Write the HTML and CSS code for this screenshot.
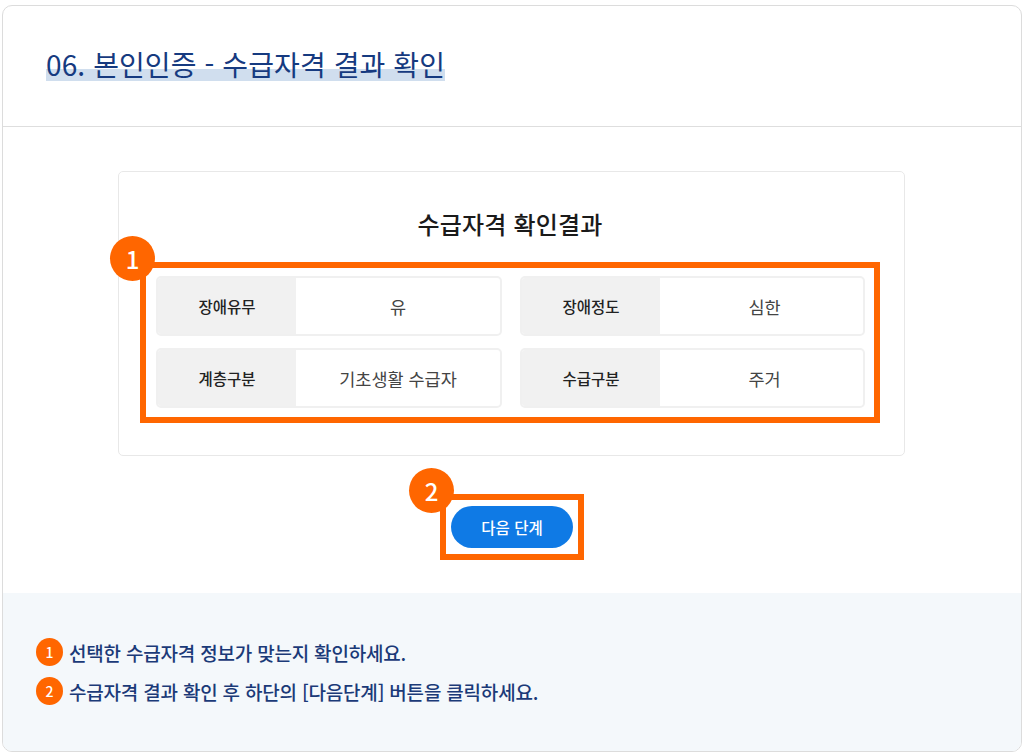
FILE: index.html
```html
<!DOCTYPE html>
<html lang="ko">
<head>
<meta charset="utf-8">
<title>본인인증 - 수급자격 결과 확인</title>
<link rel="stylesheet" href="styles.css">
</head>
<body>
<main class="card">
  <header class="head">
    <h1 class="title">06. 본인인증 - 수급자격 결과 확인</h1>
  </header>
  <section class="body">
    <div class="panel">
      <h2 class="panel-title">수급자격 확인결과</h2>
      <div class="mark mark-grid">
        <span class="badge">1</span>
        <div class="grid">
          <div class="row"><div class="label">장애유무</div><div class="value">유</div></div>
          <div class="row row-right"><div class="label">장애정도</div><div class="value">심한</div></div>
          <div class="row"><div class="label">계층구분</div><div class="value">기초생활 수급자</div></div>
          <div class="row row-right"><div class="label">수급구분</div><div class="value">주거</div></div>
        </div>
      </div>
    </div>
    <div class="mark mark-btn">
      <span class="badge">2</span>
      <button class="next" type="button">다음 단계</button>
    </div>
  </section>
  <footer class="foot">
    <p class="note"><span class="dot">1</span>선택한 수급자격 정보가 맞는지 확인하세요.</p>
    <p class="note"><span class="dot">2</span>수급자격 결과 확인 후 하단의 [다음단계] 버튼을 클릭하세요.</p>
  </footer>
</main>
</body>
</html>
```
FILE: styles.css
```css
* { box-sizing: border-box; }
html, body { margin: 0; height: 100%; background: #fff; }
body {
  padding: 5px 3px 2px 2px;
  font-family: "Noto Sans CJK KR", "Noto Sans", sans-serif;
}
.card {
  height: 747px;
  border: 1px solid #dcdcdc;
  border-radius: 10px;
  overflow: hidden;
  display: flex;
  flex-direction: column;
  background: #fff;
}
.head {
  height: 121px;
  flex: none;
  border-bottom: 1px solid #dedede;
  padding: 39px 0 0 43px;
}
.title {
  display: inline-block;
  margin: 0;
  font-size: 28px;
  font-weight: 400;
  line-height: 38px;
  letter-spacing: 0.1px;
  color: #163a80;
  background: linear-gradient(transparent 63%, #d0deee 63%, #d0deee 95%, transparent 95%);
}
.body {
  flex: 1;
  display: flex;
  flex-direction: column;
  align-items: center;
  padding-top: 44px;
}
.panel {
  width: 787px;
  height: 285px;
  align-self: flex-start;
  margin-left: 115px;
  border: 1px solid #e8e8e8;
  border-radius: 5px;
  padding: 34px 24px 0 21px;
  flex: none;
}
.panel-title {
  margin: 0 0 20px;
  text-align: center;
  font-size: 24px;
  line-height: 36px;
  font-weight: 500;
  letter-spacing: 0.2px;
  color: #1a1a1a;
}
.mark {
  position: relative;
  border: 6px solid #ff6600;
}
.mark-grid {
  padding: 8px 9px 9px 10px;
  height: 161px;
}
.grid {
  display: grid;
  grid-template-columns: 346px 345px;
  column-gap: 18px;
  row-gap: 12px;
}
.row {
  display: flex;
  height: 60px;
  border: 2px solid #f0f0f0;
  border-radius: 5px;
  overflow: hidden;
  background: #fff;
}
.label {
  width: 138px;
  flex: none;
  background: #f1f1f1;
  display: flex;
  align-items: center;
  justify-content: center;
  font-size: 15.5px;
  font-weight: 500;
  color: #222;
}
.value {
  flex: 1;
  display: flex;
  align-items: center;
  justify-content: center;
  font-size: 17.5px;
  color: #444;
}
.row-right .value { padding-left: 6px; }
.badge {
  position: absolute;
  left: -36px;
  top: -32px;
  width: 45px;
  height: 45px;
  border-radius: 50%;
  background: #ff6600;
  color: #fff;
  font-size: 24px;
  font-weight: 500;
  display: flex;
  align-items: center;
  justify-content: center;
}
.mark-btn {
  width: 144px;
  height: 66px;
  margin-top: 38px;
  flex: none;
  display: flex;
  align-items: center;
  justify-content: center;
}
.mark-btn .badge { left: -37px; top: -32px; }
.next {
  width: 122px;
  height: 42px;
  border: 0;
  border-radius: 21px;
  background: #0f7ae5;
  color: #fff;
  font-family: inherit;
  font-size: 15.5px;
  font-weight: 500;
  padding: 0;
}
.foot {
  height: 158px;
  flex: none;
  background: #f4f8fb;
  padding: 45px 0 0 33px;
}
.note {
  margin: 0 0 11px;
  display: flex;
  align-items: center;
  height: 28px;
  font-size: 19px;
  font-weight: 500;
  letter-spacing: -0.2px;
  color: #1b3a78;
}
.dot {
  width: 27px;
  height: 28px;
  border-radius: 50%;
  background: #ff6600;
  color: #fff;
  font-size: 14px;
  display: flex;
  align-items: center;
  justify-content: center;
  margin-right: 6px;
  flex: none;
}
```
